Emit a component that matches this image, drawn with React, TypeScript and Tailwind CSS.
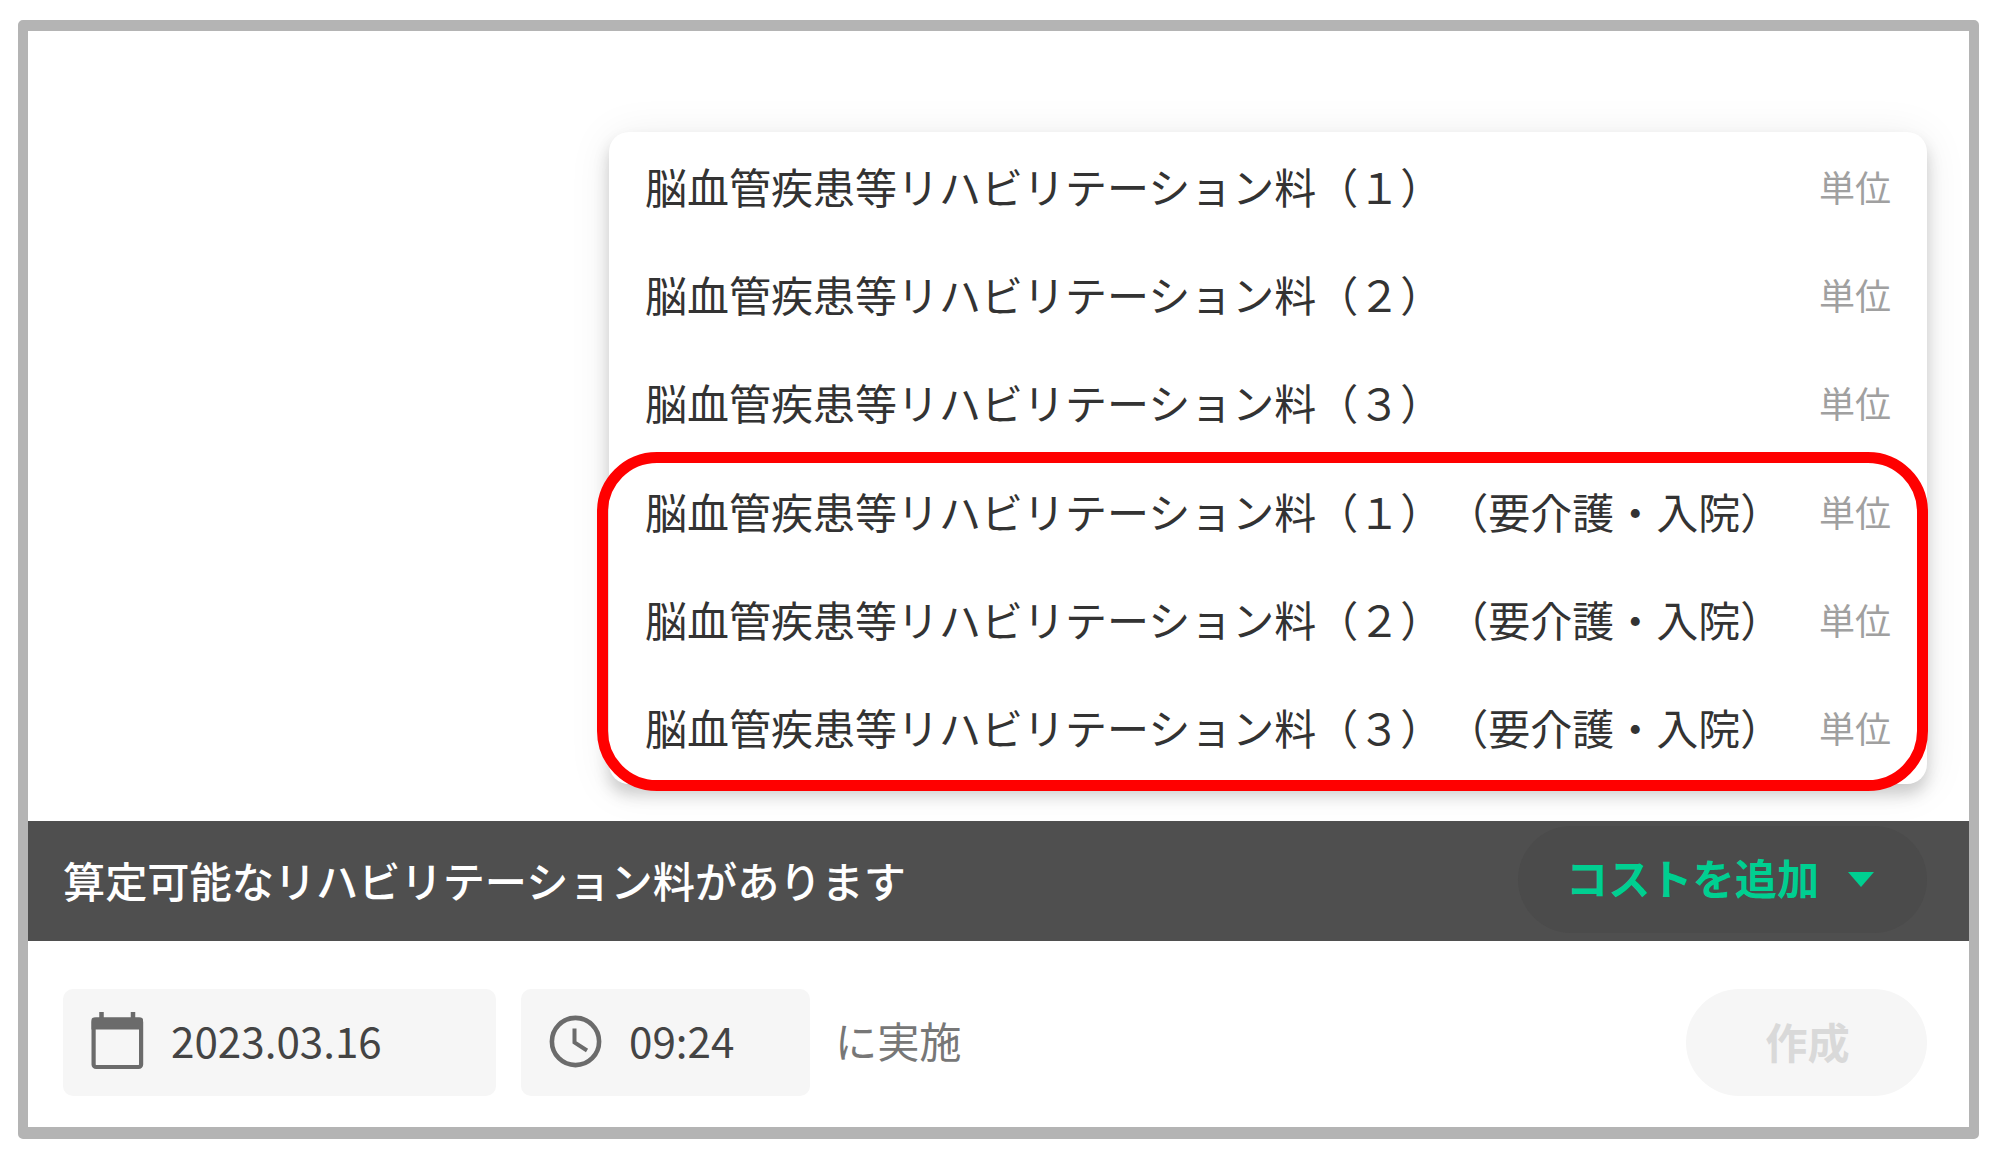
import React from 'react'

const costItems = [
  { name: '脳血管疾患等リハビリテーション料（１）', note: '', unit: '単位' },
  { name: '脳血管疾患等リハビリテーション料（２）', note: '', unit: '単位' },
  { name: '脳血管疾患等リハビリテーション料（３）', note: '', unit: '単位' },
  { name: '脳血管疾患等リハビリテーション料（１）', note: '（要介護・入院）', unit: '単位' },
  { name: '脳血管疾患等リハビリテーション料（２）', note: '（要介護・入院）', unit: '単位' },
  { name: '脳血管疾患等リハビリテーション料（３）', note: '（要介護・入院）', unit: '単位' }
]

const CalendarIcon: React.FC = () => (
  <svg className="w-[53px] h-[58px] shrink-0 mb-[3px]" viewBox="0 0 53 58" fill="none">
    <path d="M10.5 0v8M42 0v8" stroke="#6b6b6b" strokeWidth="4.5" />
    <rect x="2.6" y="7.5" width="47.5" height="47.5" rx="2.5" stroke="#6b6b6b" strokeWidth="4.2" />
    <path d="M3 5.5h46.5a2.5 2.5 0 0 1 2.5 2.5v9.5H.5V8A2.5 2.5 0 0 1 3 5.5z" fill="#6b6b6b" />
  </svg>
)

const ClockIcon: React.FC = () => (
  <svg className="w-[53px] h-[53px] shrink-0 mb-[2px]" viewBox="0 0 53 53" fill="none" stroke="#6b6b6b">
    <circle cx="26.5" cy="26.5" r="23.6" strokeWidth="4.6" />
    <path d="M25.5 13.5v14l12.5 8" strokeWidth="4" />
  </svg>
)

const CostMenu: React.FC = () => (
  <div className="relative mt-[101px] ml-[581px] w-[1318px] h-[652px] rounded-[20px] bg-white shadow-[0_10px_16px_rgba(0,0,0,0.18),0_4px_44px_rgba(0,0,0,0.08)]">
    <ul>
      {costItems.map((item) => (
        <li key={item.name + item.note} className="flex h-[108.3px] items-center justify-between pb-px pl-9 pr-9">
          <span className="text-[42px] leading-none text-[#333]">
            {item.name}
            {item.note && <span className="ml-1">{item.note}</span>}
          </span>
          <span className="text-[36px] leading-none text-[#a0a0a0]">{item.unit}</span>
        </li>
      ))}
    </ul>
    {/* Highlight around the inpatient care items */}
    <div className="absolute top-[320px] -left-3 w-[1331px] h-[339px] rounded-[60px] border-[11px] border-[#ff0000]" />
  </div>
)

export default function App() {
  return (
    <div className="h-[1156px] w-[2000px] overflow-hidden bg-white pt-5 pl-[18px] font-['Noto_Sans_CJK_JP',sans-serif] whitespace-nowrap [text-spacing-trim:space-all]">
      <div className="flex h-[1119px] w-[1961px] flex-col rounded-[5px] border-x-10 border-t-[11px] border-b-[12px] border-[#b4b4b4]">
        <CostMenu />

        {/* Notice bar */}
        <div className="relative mt-[37px] flex h-[120px] shrink-0 items-center justify-between bg-[#4f4f4f] pl-[35px] pr-[42px]">
          <p className="pb-[2px] text-[42.2px] leading-none font-medium text-white">
            算定可能なリハビリテーション料があります
          </p>
          <button className="mb-[3px] flex h-[107px] w-[409px] items-center rounded-full bg-[#4b4b4b] pl-[48px]">
            <span className="pb-1 text-[42.2px] leading-none font-bold text-[#00cf91]">コストを追加</span>
            <svg className="mb-px ml-[29px] h-[15px] w-[26px]" viewBox="0 0 26 15">
              <path d="M0 0h26L13 15z" fill="#00cf91" />
            </svg>
          </button>
        </div>

        {/* Date, time and submit */}
        <div className="mt-12 flex h-[107px] shrink-0 items-center pl-[35px] pr-[42px] text-[42.2px] leading-none">
          <div className="flex h-full w-[433px] items-center rounded-[10px] bg-[#f6f6f6] pl-7">
            <CalendarIcon />
            <span className="mb-1 ml-[27px] text-[#444]">2023.03.16</span>
          </div>
          <div className="ml-[25px] flex h-full w-[289px] items-center rounded-[10px] bg-[#f6f6f6] pl-7">
            <ClockIcon />
            <span className="mb-1 ml-[27px] text-[#444]">09:24</span>
          </div>
          <span className="mb-1 ml-[25px] text-[#777]">に実施</span>
          <button className="ml-auto h-full w-[241px] rounded-full bg-[#f6f6f6] pb-[3px] pl-[2px] font-bold text-[#d9d9d9]">
            作成
          </button>
        </div>
      </div>
    </div>
  )
}
